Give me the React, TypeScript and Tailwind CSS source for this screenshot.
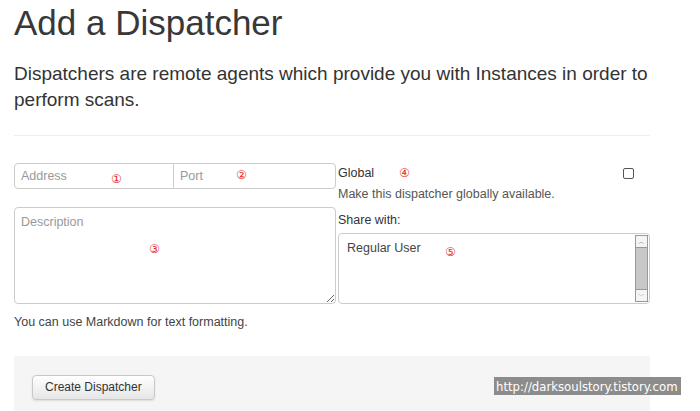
const FONT = "'Liberation Sans', Arial, sans-serif";

function Mark({ children }: { children: string }) {
  return (
    <span className="pointer-events-none absolute text-[12px] leading-none text-[#e8282b]" style={{ fontFamily: "'DejaVu Sans', sans-serif" }}>
      {children}
    </span>
  );
}

export default function App() {
  return (
    <div className="relative h-[411px] w-[700px] overflow-hidden bg-white text-[#333]" style={{ fontFamily: FONT }}>
      <div className="w-[650px] pl-[14px]">
        <h1 className="pt-[3px] text-[35px] leading-[40px] text-[#383838]">Add a Dispatcher</h1>
        <p className="mt-[18px] text-[19px] leading-[26px] text-[#333]">
          Dispatchers are remote agents which provide you with Instances in order to perform scans.
        </p>
        <hr className="mt-[22px] border-t border-[#eee]" />

        <div className="mt-[27px] flex gap-[2px]">
          {/* left column */}
          <div className="w-[322px] shrink-0">
            <div className="relative flex h-[26px] w-[322px]">
              <input
                placeholder="Address"
                className="h-full w-[160px] min-w-0 shrink-0 rounded-l-[4px] border border-[#ccc] px-[6px] text-[12.5px] text-[#555] outline-none placeholder:text-[#999]"
              />
              <input
                placeholder="Port"
                className="-ml-px h-full w-[163px] min-w-0 shrink-0 rounded-r-[4px] border border-[#ccc] px-[6px] text-[12.5px] text-[#555] outline-none placeholder:text-[#999]"
              />
              <div className="absolute top-[10px] left-[97px]"><Mark>①</Mark></div>
              <div className="absolute top-[6px] left-[222px]"><Mark>②</Mark></div>
            </div>
            <div className="relative mt-[18px]">
              <textarea
                placeholder="Description"
                className="block h-[97px] w-full resize-y rounded-[4px] border border-[#ccc] px-[6px] py-[5px] text-[12.5px] text-[#555] outline-none placeholder:text-[#999]"
              />
              <div className="absolute top-[36px] left-[135px]"><Mark>③</Mark></div>
            </div>
            <p className="mt-[10px] text-[12.5px] leading-[16px] text-[#444]">You can use Markdown for text formatting.</p>
          </div>

          {/* right column */}
          <div className="w-[312px] shrink-0 text-[12.5px]">
            <div className="relative flex items-center justify-between pr-[16px] pt-[2px]">
              <span className="leading-[16px] text-[#333]">Global</span>
              <input type="checkbox" className="h-[11px] w-[11px] appearance-none rounded-[2px] border border-[#555] bg-white" />
              <div className="absolute top-[4px] left-[61px]"><Mark>④</Mark></div>
            </div>
            <p className="mt-[5px] leading-[16px] text-[#555]">Make this dispatcher globally available.</p>
            <p className="mt-[10px] leading-[16px] text-[#333]">Share with:</p>
            <div className="relative mt-[5px] flex h-[71px] rounded-[4px] border border-[#ccc] bg-white">
              <div className="flex-1 px-[8px] py-[5px] text-[12.5px] text-[#444]">Regular User</div>
              <div className="my-[1px] mr-[1px] flex w-[13px] flex-col border border-[#999] bg-[#c8c8c8]">
                <div className="flex h-[12px] items-center justify-center border-b border-[#999] bg-[#f4f4f4] text-[7px] leading-none text-[#888]">︿</div>
                <div className="flex-1" />
                <div className="flex h-[12px] items-center justify-center border-t border-[#999] bg-[#f4f4f4] text-[7px] leading-none text-[#888]">﹀</div>
              </div>
              <div className="absolute top-[12px] left-[106px]"><Mark>⑤</Mark></div>
            </div>
          </div>
        </div>

        <div className="mt-[26px] h-[60px] bg-[#f5f5f5] px-[18px] pt-[18px]">
          <button className="h-[25px] rounded-[4px] border border-[#c8c8c8] bg-gradient-to-b from-white to-[#e6e6e6] px-[12px] text-[12px] text-[#333] shadow-[0_1px_2px_rgba(0,0,0,0.1)]">
            Create Dispatcher
          </button>
        </div>
      </div>

      <div className="absolute top-[377px] left-[494px] flex h-[18px] w-[187px] items-center bg-[#8c8c8c] px-[2px] text-[13px] leading-none text-white" style={{ fontFamily: "'DejaVu Sans Condensed', 'Liberation Sans Narrow', sans-serif" }}>
        http://darksoulstory.tistory.com
      </div>
    </div>
  );
}
